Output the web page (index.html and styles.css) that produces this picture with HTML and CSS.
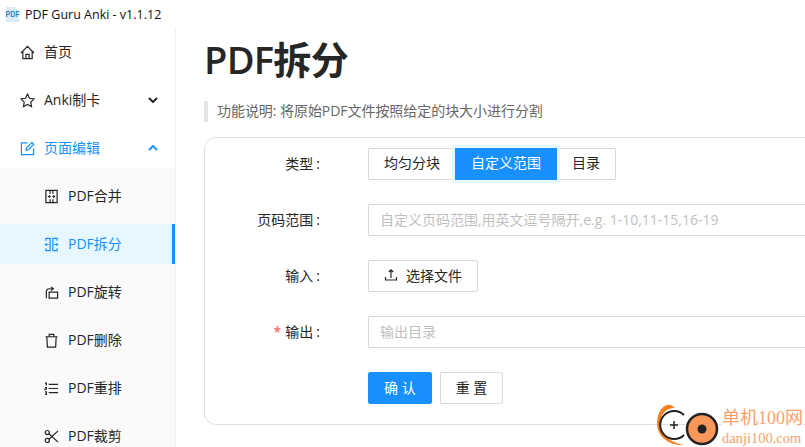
FILE: index.html
```html
<!DOCTYPE html>
<html lang="en">
<head>
    <meta charset="UTF-8">
    <title>PDF Guru Anki</title>
    <link rel="stylesheet" href="styles.css">
</head>
<body>

    <div class="titlebar">
        <svg class="app-logo" width="15" height="15" viewBox="0 0 15 15">
            <path d="M1 0h9l4 4v11H1z" fill="#dcecf7"/>
            <text x="0.500" y="7.700" class="app-logo-text" transform="scale(1 1.300)">PDF</text>
        </svg>
        <span>PDF Guru Anki - v1.1.12</span>
    </div>

    <div class="app">
        <nav class="sidebar">
            <a class="menu-item">
                <svg class="icon" viewBox="0 0 16 16"><path d="M1 8.500 8 1.500l7 7M3 7v7.500h10V7M6.300 14.500v-4.500h3.400v4.500"/></svg>
                <span>首页</span>
            </a>
            <a class="menu-item">
                <svg class="icon" viewBox="0 0 16 16"><path d="M8 1.200 10.100 5.600l4.900.7-3.500 3.400.8 4.800L8 12.200l-4.300 2.300.8-4.800L1 6.300l4.900-.7z"/></svg>
                <span>Anki制卡</span>
                <svg class="arrow" viewBox="0 0 10 6"><path d="M1 1l4 4 4-4"/></svg>
            </a>
            <a class="menu-item open">
                <svg class="icon" viewBox="0 0 16 16"><path d="M14.500 8v6.500h-13V2H8M6.500 9.800l.4-2.500L12.700 1.500l2 2-5.800 5.800z"/></svg>
                <span>页面编辑</span>
                <svg class="arrow" viewBox="0 0 10 6"><path d="M1 5l4-4 4 4"/></svg>
            </a>

            <div class="submenu">
                <a class="menu-item sub">
                    <svg class="icon" viewBox="0 0 16 16"><path d="M2 1.500h12v13H2zM6.500 1.500v3.500M6.500 11v3.500M9.500 1.500v3.500M9.500 11v3.500M4 8h2.500M5.300 6.800 6.500 8 5.300 9.200M12 8H9.500M10.700 6.800 9.500 8l1.200 1.200"/></svg>
                    <span>PDF合并</span>
                </a>
                <a class="menu-item sub active">
                    <svg class="icon" viewBox="0 0 16 16"><path d="M2 4V1.500h4.500v13H2V12M14 4V1.500H9.500v13H14V12M5 8H1.500M2.700 6.800 1.500 8l1.200 1.200M11 8h3.500M13.300 6.800 14.500 8l-1.200 1.200"/></svg>
                    <span>PDF拆分</span>
                </a>
                <a class="menu-item sub">
                    <svg class="icon" viewBox="0 0 16 16"><path d="M5.500 7.500h9v6.500h-9zM2.500 14V7Q2.500 4 6 4h3.500M7.500 2 10 4 7.500 6"/></svg>
                    <span>PDF旋转</span>
                </a>
                <a class="menu-item sub">
                    <svg class="icon" viewBox="0 0 16 16"><path d="M1.500 4h13M5.500 4V1.500h5V4M3 4l.6 11h8.800L13 4"/></svg>
                    <span>PDF删除</span>
                </a>
                <a class="menu-item sub">
                    <svg class="icon" viewBox="0 0 16 16"><path d="M5 3.500h10M5 8h10M5 12.500h10M1 2.200h1.500v2.500M1 7h1.500v1.800H1v1M1 11.500h1.500v2.800H1"/></svg>
                    <span>PDF重排</span>
                </a>
                <a class="menu-item sub">
                    <svg class="icon" viewBox="0 0 16 16"><circle cx="3.500" cy="3.800" r="2.200"/><circle cx="3.500" cy="12.200" r="2.200"/><path d="M5.300 5 15 14M5.300 11 15 2"/></svg>
                    <span>PDF裁剪</span>
                </a>
            </div>
        </nav>

        <main class="content">
            <h1 class="page-title">PDF拆分</h1>
            <p class="note">功能说明: 将原始PDF文件按照给定的块大小进行分割</p>

            <form class="card">
                <div class="form-row">
                    <label class="form-label">类型</label>
                    <div class="radio-group">
                        <span class="radio">均匀分块</span>
                        <span class="radio checked">自定义范围</span>
                        <span class="radio">目录</span>
                    </div>
                </div>
                <div class="form-row">
                    <label class="form-label">页码范围</label>
                    <input class="text-input" placeholder="自定义页码范围,用英文逗号隔开,e.g. 1-10,11-15,16-19">
                </div>
                <div class="form-row">
                    <label class="form-label">输入</label>
                    <button type="button" class="btn upload-btn">
                        <svg class="upload-icon" viewBox="0 0 14 14"><path d="M1.500 9v3h11V9M7 10V2M4.800 4 7 1.800 9.200 4"/></svg>
                        <span>选择文件</span>
                    </button>
                </div>
                <div class="form-row">
                    <label class="form-label"><span class="required">*</span>输出</label>
                    <input class="text-input" placeholder="输出目录">
                </div>
                <div class="form-row last">
                    <span class="form-spacer"></span>
                    <button type="button" class="btn btn-primary">确 认</button>
                    <button type="button" class="btn">重 置</button>
                </div>
            </form>
        </main>
    </div>

    <div class="watermark">
        <svg class="watermark-logo" width="64" height="47" viewBox="0 0 64 47">
            <path d="M15 5C6 3 1 14 1 24c0 12 12 22 27 21-10-2-24-8-24-21C4 15 9 8 19 8z" fill="#f5821f"/>
            <path d="M28 15A14 14 0 1 0 28 35" fill="none" stroke="#222" stroke-width="2"/>
            <path d="M14 25h8M18 21v8" fill="none" stroke="#222" stroke-width="1.500"/>
            <circle cx="46" cy="29" r="15" fill="#f9975a" stroke="#222" stroke-width="2.500"/>
            <circle cx="46" cy="29" r="4.500" fill="#222"/>
        </svg>
        <div class="watermark-text">
            <span class="watermark-name">单机100网</span>
            <span class="watermark-url">danji100.com</span>
        </div>
    </div>

</body>
</html>
```

FILE: styles.css
```css
* {
    box-sizing: border-box;
}
body {
    margin: 0;
    width: 805px;
    height: 447px;
    overflow: hidden;
    position: relative;
    background: white;
    color: #262626;
    font-family: "Open Sans", "Noto Sans CJK SC", sans-serif;
    font-size: 14px;
}
.titlebar {
    height: 28px;
    display: flex;
    align-items: center;
    gap: 5px;
    padding-left: 5px;
    font-size: 12.500px;
    color: #111;
}
.app-logo-text {
    font-family: "Liberation Sans", sans-serif;
    font-size: 7px;
    font-weight: bold;
    fill: #2f86c6;
}
.app {
    display: flex;
    height: 419px;
}
.sidebar {
    width: 176px;
    flex-shrink: 0;
    border-right: 1px solid #f0f0f0;
}
.menu-item {
    height: 40px;
    margin: 4px 0 8px;
    padding-left: 20px;
    padding-right: 17px;
    display: flex;
    align-items: center;
    gap: 9px;
    color: #262626;
}
.menu-item span {
    flex: 1;
    padding-bottom: 2px;
}
.menu-item.open {
    color: #1890ff;
}
.icon {
    width: 15px;
    height: 15px;
    flex-shrink: 0;
    fill: none;
    stroke: currentColor;
    stroke-width: 1.300;
}
.arrow {
    width: 10px;
    height: 6px;
    fill: none;
    stroke: currentColor;
    stroke-width: 2;
}
.submenu {
    background: #fafafa;
    margin-right: -1px;
    padding-bottom: 4px;
    margin-top: -8px;
    padding-top: 4px;
    border-right: 1px solid #f0f0f0;
}
.menu-item.sub {
    padding-left: 44px;
}
.menu-item.sub.active {
    background: #e6f7ff;
    color: #1890ff;
    border-right: 3px solid #1890ff;
}
.content {
    flex: 1;
    padding-left: 28px;
    min-width: 0;
}
.page-title {
    margin: 6px 0 0;
    font-size: 38px;
    line-height: 50px;
    letter-spacing: -0.700px;
    font-weight: 600;
}
.note {
    margin: 17px 0 15px;
    height: 21px;
    line-height: 19px;
    border-left: 4px solid #e5e5e5;
    padding-left: 9px;
    font-size: 14px;
    letter-spacing: -0.050px;
    color: #666;
}
.card {
    width: 700px;
    height: 288px;
    border: 1px solid #e0e0e0;
    border-radius: 12px;
    padding: 10px 0 0;
}
.form-row {
    display: flex;
    align-items: center;
    height: 32px;
    margin-bottom: 24px;
}
.form-label {
    width: 123px;
    margin-right: 40px;
    padding-bottom: 2px;
    text-align: right;
    flex-shrink: 0;
}
.form-label::after {
    content: ":";
    margin: 0 8px 0 3px;
}
.form-spacer {
    width: 163px;
    flex-shrink: 0;
}
.required {
    color: #ff4d4f;
    margin-right: 4px;
}
.radio-group {
    display: flex;
}
.radio {
    height: 32px;
    line-height: 28px;
    padding: 0 15px;
    border: 1px solid #d9d9d9;
    margin-left: -1px;
}
.radio:first-child {
    margin-left: 0;
    border-radius: 2px 0 0 2px;
}
.radio:last-child {
    border-radius: 0 2px 2px 0;
}
.radio.checked {
    background: #1890ff;
    border-color: #1890ff;
    color: white;
    box-shadow: 0 0 0 3px #e6f7ff;
    position: relative;
}
.text-input {
    flex: 1;
    height: 32px;
    margin-right: -40px;
    padding: 0 11px 2px;
    border: 1px solid #d9d9d9;
    border-radius: 2px;
    font: inherit;
}
.text-input::placeholder {
    color: #bfbfbf;
}
.btn {
    height: 32px;
    padding: 0 15px 2px;
    background: white;
    border: 1px solid #d9d9d9;
    border-radius: 2px;
    color: #262626;
    font: inherit;
    margin-right: 8px;
}
.btn-primary {
    background: #1890ff;
    border-color: #1890ff;
    color: white;
}
.upload-btn {
    display: flex;
    align-items: center;
    gap: 8px;
}
.upload-icon {
    width: 14px;
    height: 14px;
    fill: none;
    stroke: #262626;
    stroke-width: 1.200;
}
.watermark {
    position: absolute;
    right: 2px;
    bottom: 0;
    display: flex;
    align-items: flex-start;
    gap: 2px;
    height: 47px;
    color: #f9a268;
    font-family: "Liberation Serif", "Noto Sans CJK SC", serif;
}
.watermark-text {
    display: flex;
    flex-direction: column;
    padding-top: 7px;
    background: white;
    height: 47px;
}
.watermark-name {
    font-size: 18px;
    line-height: 23px;
}
.watermark-url {
    font-size: 14.500px;
    line-height: 16px;
}
```
